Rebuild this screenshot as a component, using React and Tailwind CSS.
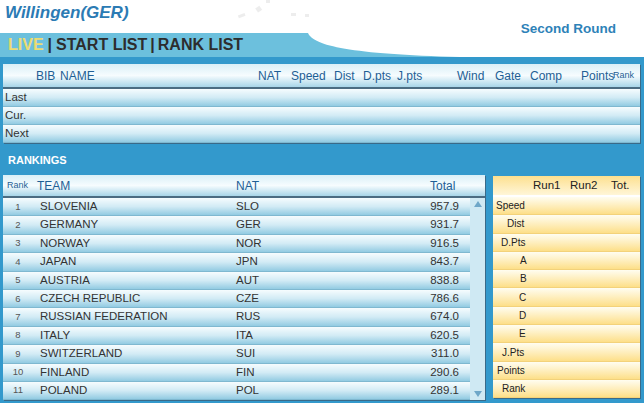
import React from "react";

const liveCols = [
  { label: "BIB", w: "w-[24px]" },
  { label: "NAME", w: "w-[198px]" },
  { label: "NAT", w: "w-[33px]" },
  { label: "Speed", w: "w-[43px]" },
  { label: "Dist", w: "w-[29px]" },
  { label: "D.pts", w: "w-[34px]" },
  { label: "J.pts", w: "w-[60px]" },
  { label: "Wind", w: "w-[38px]" },
  { label: "Gate", w: "w-[35px]" },
  { label: "Comp", w: "w-[51px]" },
  { label: "Points", w: "w-[32px]" },
];

const rankings = [
  ["1", "SLOVENIA", "SLO", "957.9"],
  ["2", "GERMANY", "GER", "931.7"],
  ["3", "NORWAY", "NOR", "916.5"],
  ["4", "JAPAN", "JPN", "843.7"],
  ["5", "AUSTRIA", "AUT", "838.8"],
  ["6", "CZECH REPUBLIC", "CZE", "786.6"],
  ["7", "RUSSIAN FEDERATION", "RUS", "674.0"],
  ["8", "ITALY", "ITA", "620.5"],
  ["9", "SWITZERLAND", "SUI", "311.0"],
  ["10", "FINLAND", "FIN", "290.6"],
  ["11", "POLAND", "POL", "289.1"],
];

// label + left indent as in the original panel
const details = [
  ["Speed", "pl-[3px]"],
  ["Dist", "pl-[14px]"],
  ["D.Pts", "pl-[8px]"],
  ["A", "pl-[27px]"],
  ["B", "pl-[27px]"],
  ["C", "pl-[26px]"],
  ["D", "pl-[26px]"],
  ["E", "pl-[26px]"],
  ["J.Pts", "pl-[9px]"],
  ["Points", "pl-[4px]"],
  ["Rank", "pl-[9px]"],
];

const blueRow = "bg-linear-to-b from-[#f6fcfe] via-[#d2ebf5] to-[#92cbe2] border-b border-[#7fb8d0]";
const yellowRow = "bg-linear-to-b from-[#fffdf0] to-[#fddf88] border-b border-[#f3d27a]";

export default function App() {
  return (
    <div className="w-[644px] h-[403px] overflow-hidden bg-[#3399cc] font-['Liberation_Sans',Arial,sans-serif]">
      {/* Header */}
      <div className="relative h-[57px] bg-white">
        <svg className="absolute inset-0" width="644" height="57" viewBox="0 0 644 57">
          <rect x="0" y="33" width="644" height="24" fill="#6cc0dd" />
          <path d="M308,33 C314,46 350,54 460,57 L644,57 L644,33 Z" fill="#ffffff" />
          <g fill="#e2e2e2" opacity="0.6">
            <rect x="238" y="14" width="7" height="3" transform="rotate(-20 242 15)" />
            <rect x="256" y="7" width="5" height="5" transform="rotate(-35 258 9)" />
            <rect x="266" y="0" width="4" height="3" />
            <rect x="291" y="13" width="5" height="3" />
            <rect x="305" y="14" width="4" height="3" />
          </g>
        </svg>
        <div className="relative flex h-[33px] items-start justify-between">
          <div className="pl-[5px] pt-[2px] text-[17px] font-bold italic text-[#2b7bb4] leading-[22px]">
            Willingen(GER)
          </div>
          <div className="pr-[28px] pt-[21px] text-[13.5px] font-bold text-[#2e82b8] leading-[16px]">
            Second Round
          </div>
        </div>
        <div className="relative flex h-[24px] items-center pl-[8px] text-[16px] font-bold leading-none text-[#2d2d2d]">
          <span className="text-[#ecdc72]">LIVE</span>
          <span className="mx-[4px]">|</span>
          <span>START LIST</span>
          <span className="mx-[3px]">|</span>
          <span>RANK LIST</span>
        </div>
      </div>

      {/* Live table */}
      <div className="ml-[3px] mt-[7px] w-[637px] shadow-[1px_1px_0_#3a6a88]">
        <div className="flex h-[25px] items-center border-b-2 border-[#4b6c82] bg-linear-to-b from-[#d9eff7] via-[#f6fcfe] to-[#a7d5e8] pl-[33px] text-[12px] text-[#1f5f95]">
          {liveCols.map((c) => (
            <span key={c.label} className={`${c.w} shrink-0`}>
              {c.label}
            </span>
          ))}
          <span className="text-[9px]">Rank</span>
        </div>
        {["Last", "Cur.", "Next"].map((label) => (
          <div key={label} className={`flex h-[18px] items-center pl-[2px] text-[11.5px] text-[#333] ${blueRow}`}>
            {label}
          </div>
        ))}
      </div>

      <div className="h-[32px] pl-[8px] pt-[11px] text-[11px] font-bold leading-[13px] text-white">RANKINGS</div>

      <div className="ml-[3px] flex items-start">
        {/* Rankings */}
        <div className="w-[482px] shadow-[1px_1px_0_#3a6a88]">
          <div className="flex h-[23px] items-center border-b-2 border-[#4b6c82] bg-linear-to-b from-[#d9eff7] via-[#f6fcfe] to-[#a7d5e8] text-[12px] text-[#1f5f95]">
            <span className="w-[34px] shrink-0 pl-[4px] text-[9px]">Rank</span>
            <span className="w-[199px] shrink-0">TEAM</span>
            <span className="w-[194px] shrink-0">NAT</span>
            <span className="shrink-0">Total</span>
          </div>
          <div className="flex">
            <div className="w-[467px]">
              {rankings.map(([rank, team, nat, total]) => (
                <div key={rank} className={`flex h-[18.4px] items-center text-[11.5px] text-[#333] ${blueRow}`}>
                  <span className="w-[30px] shrink-0 text-center text-[9.5px] text-[#555]">{rank}</span>
                  <span className="w-[203px] shrink-0 pl-[7px]">{team}</span>
                  <span className="w-[60px] shrink-0">{nat}</span>
                  <span className="w-[163px] shrink-0 text-right">{total}</span>
                </div>
              ))}
            </div>
            <div className="flex w-[15px] flex-col items-center justify-between bg-[#cfe9f3] py-[3px]">
              <svg width="8" height="6" viewBox="0 0 8 6">
                <path d="M0,6 L4,0 L8,6 Z" fill="#6fa7c8" />
              </svg>
              <svg width="8" height="6" viewBox="0 0 8 6">
                <path d="M0,0 L8,0 L4,6 Z" fill="#6fa7c8" />
              </svg>
            </div>
          </div>
        </div>

        {/* Details */}
        <div className="ml-[8px] mt-[1px] w-[147px] shadow-[1px_1px_0_#3a6a88]">
          <div className="flex h-[21px] items-center border-b-2 border-white bg-linear-to-b from-[#fde08e] to-[#fff6d8] text-[11.5px] text-[#222]">
            <span className="w-[40px] shrink-0" />
            <span className="w-[37px] shrink-0">Run1</span>
            <span className="w-[41px] shrink-0">Run2</span>
            <span>Tot.</span>
          </div>
          {details.map(([d, indent]) => (
            <div key={d} className={`flex h-[18.3px] items-center text-[10px] text-[#222] ${yellowRow}`}>
              <span className={indent}>{d}</span>
            </div>
          ))}
        </div>
      </div>
    </div>
  );
}
